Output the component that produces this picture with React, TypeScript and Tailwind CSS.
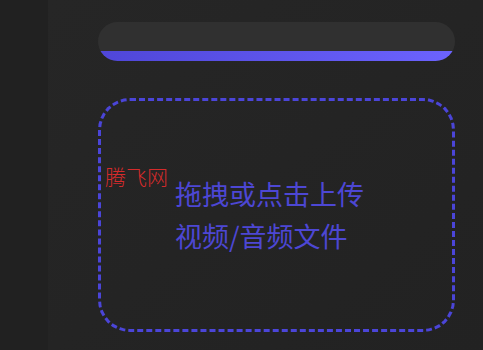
export default function App() {
  return (
    <div className="flex h-[350px] w-[483px] overflow-hidden bg-[#242424] font-['Noto_Sans_CJK_SC',sans-serif]">
      {/* sidebar */}
      <div className="w-12 shrink-0 bg-[#212121]" />

      <main className="flex flex-1 flex-col gap-[37px] bg-gradient-to-br from-[#262626] to-[#222222] pl-[50px] pr-[28px] pt-[22px]">
        <div className="flex h-[39px] flex-col justify-end overflow-hidden rounded-full bg-[#303030]">
          <div className="h-[10px] bg-gradient-to-r from-[#4f46d8] to-[#6c63ff]" />
        </div>

        <div className="relative flex h-[234px] items-center justify-center rounded-[32px] border-[3px] border-dashed border-[#4b45d8] pr-[14px]">
          <span className="absolute left-[4px] top-[65px] text-[21px] font-light leading-none text-[#d42b2b]">
            腾飞网
          </span>
          <div className="text-left text-[27px] leading-[42px] text-[#4d47d4]">
            <p>拖拽或点击上传</p>
            <p>视频/音频文件</p>
          </div>
        </div>
      </main>
    </div>
  );
}
